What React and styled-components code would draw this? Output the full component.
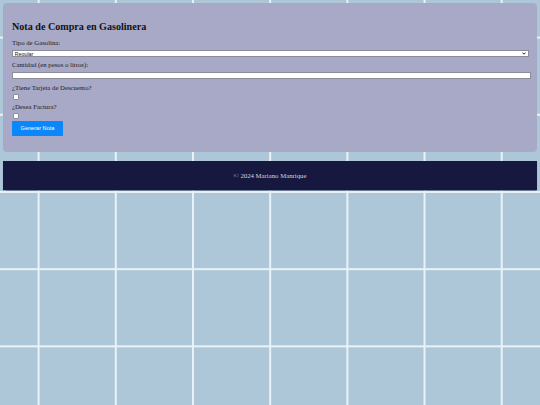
import React from "react";
import styled, { createGlobalStyle } from "styled-components";

const Global = createGlobalStyle`
  html {
    background-color: #adc7d8;
    background-image:
      linear-gradient(to right, transparent calc(50% - 1px), #e9f2f6 calc(50% - 1px), #e9f2f6 calc(50% + 1px), transparent calc(50% + 1px)),
      linear-gradient(to bottom, transparent calc(50% - 1px), #e9f2f6 calc(50% - 1px), #e9f2f6 calc(50% + 1px), transparent calc(50% + 1px));
    background-size: 77.2px 77.2px;
    background-position: 0 -1px;
    min-height: 100%;
  }
  body {
    margin: 0;
    font-family: "Liberation Serif", "Times New Roman", serif;
    font-size: 6.75px;
    color: #111;
  }
  * { box-sizing: border-box; }
`;

const Page = styled.div`
  display: flex;
  flex-direction: column;
  gap: 9px;
  padding: 3px;
`;

const Card = styled.main`
  background: #a8a9c6;
  border-radius: 4px;
  padding: 8.5px 8.5px 16px 9px;
`;

const Title = styled.h2`
  margin: 9px 0 7.5px;
  font-size: 10.125px;
  line-height: 11.2px;
  font-weight: bold;
  color: #111;
`;

const Form = styled.form`
  display: flex;
  flex-direction: column;
  align-items: flex-start;
`;

const Label = styled.label`
  display: block;
  font-size: 6.75px;
  line-height: 7.8px;
  margin-top: ${(p) => p.$top || 0}px;
  color: #1a1a24;
`;

const SelectWrap = styled.div`
  position: relative;
  width: 100%;
  margin-top: 3px;
`;

const Select = styled.select`
  appearance: none;
  display: block;
  width: 100%;
  height: 7px;
  margin: 0;
  padding: 0 0 0 1.5px;
  border: 0.5px solid #8d8d99;
  border-radius: 0;
  background: #fff;
  font-family: "Liberation Sans", Arial, sans-serif;
  font-size: 5.4px;
  line-height: 6px;
  color: #111;
`;

const Chevron = styled.svg`
  position: absolute;
  right: 3px;
  top: 2px;
  width: 4px;
  height: 3px;
  pointer-events: none;
`;

const Input = styled.input`
  display: block;
  width: calc(100% + 2.5px);
  height: 7.5px;
  margin: 3px 0 0;
  padding: 0;
  border: 0.5px solid #8d8d99;
  border-radius: 0;
  background: #fff;
`;

const Check = styled.input.attrs({ type: "checkbox" })`
  appearance: none;
  display: block;
  width: 5.6px;
  height: 5.6px;
  margin: ${(p) => p.$top}px 0 0 1px;
  border: 0.5px solid #8d8d99;
  border-radius: 1px;
  background: #fff;
`;

const Button = styled.button`
  margin-top: 2.3px;
  width: 51px;
  height: 15px;
  padding: 0;
  border: none;
  border-radius: 1px;
  background: #0b86fb;
  color: #fff;
  font-family: "Liberation Sans", Arial, sans-serif;
  font-size: 5.6px;
  cursor: pointer;
`;

const Footer = styled.footer`
  background: #161840;
  height: 29px;
  display: flex;
  align-items: center;
  justify-content: center;
  color: #d4d5df;
  font-size: 6.75px;
  box-shadow: 0 0.5px 1px rgba(40, 50, 80, 0.5);
`;

export default function App() {
  return (
    <>
      <Global />
      <Page>
        <Card>
          <Title>Nota de Compra en Gasolinera</Title>
          <Form onSubmit={(e) => e.preventDefault()}>
            <Label htmlFor="tipo">Tipo de Gasolina:</Label>
            <SelectWrap>
              <Select id="tipo" defaultValue="regular">
                <option value="regular">Regular</option>
                <option value="premium">Premium</option>
                <option value="diesel">Diésel</option>
              </Select>
              <Chevron viewBox="0 0 8 6">
                <path d="M1 1.2 L4 4.4 L7 1.2" fill="none" stroke="#111" strokeWidth="1.8" />
              </Chevron>
            </SelectWrap>
            <Label htmlFor="cantidad" $top={4.1}>Cantidad (en pesos o litros):</Label>
            <Input id="cantidad" type="text" />
            <Label htmlFor="tarjeta" $top={4.6}>¿Tiene Tarjeta de Descuento?</Label>
            <Check id="tarjeta" $top={2.4} />
            <Label htmlFor="factura" $top={2.8}>¿Desea Factura?</Label>
            <Check id="factura" $top={2.6} />
            <Button type="submit">Generar Nota</Button>
          </Form>
        </Card>
        <Footer>© 2024 Mariano Manrique</Footer>
      </Page>
    </>
  );
}
